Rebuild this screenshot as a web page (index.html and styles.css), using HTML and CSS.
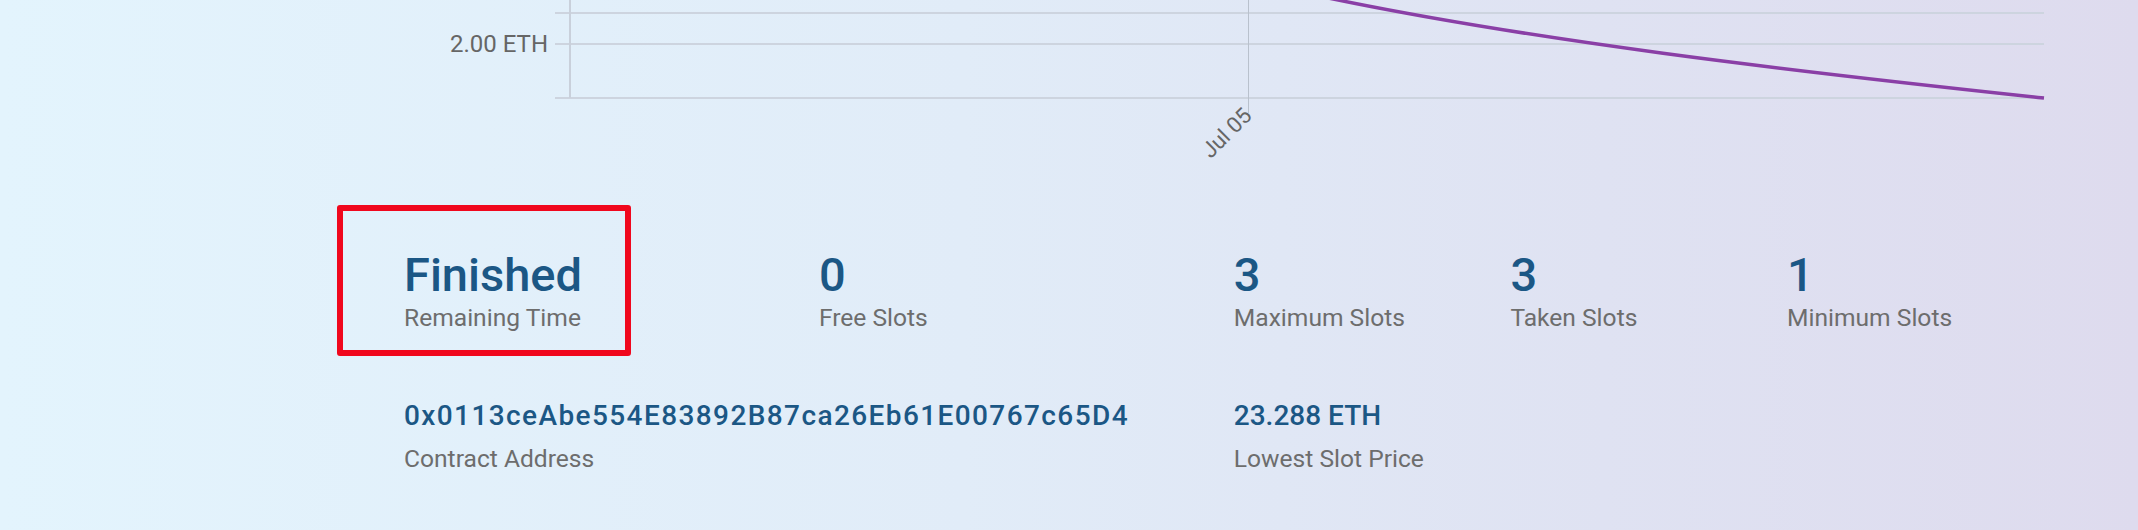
FILE: index.html
```html
<!DOCTYPE html>
<html lang="en">
<head>
<meta charset="utf-8">
<title>Slots</title>
<link rel="stylesheet" href="styles.css">
</head>
<body>
<div class="page">
  <svg class="chart" width="2138" height="176" viewBox="0 0 2138 176" xmlns="http://www.w3.org/2000/svg">
    <g class="grid">
      <line x1="555" y1="13" x2="2044" y2="13"/>
      <line x1="555" y1="44" x2="2044" y2="44"/>
      <line x1="555" y1="98" x2="2044" y2="98"/>
    </g>
    <line class="axis" x1="570" y1="0" x2="570" y2="98"/>
    <line class="vgrid" x1="1248.5" y1="0" x2="1248.5" y2="113"/>
    <text class="ylabel" x="548" y="52" text-anchor="end">2.00 ETH</text>
    <text class="xlabel" x="1253" y="117" text-anchor="end" transform="rotate(-45 1253 117)">Jul 05</text>
    <path class="curve" d="M1300,-8 C1520,40 1800,72 2044,98"/>
  </svg>

  <section class="stats">
    <div class="stat span3">
      <div class="value">Finished</div>
      <div class="label">Remaining Time</div>
      <div class="highlight"></div>
    </div>
    <div class="stat span3">
      <div class="value">0</div>
      <div class="label">Free Slots</div>
    </div>
    <div class="stat span2">
      <div class="value">3</div>
      <div class="label">Maximum Slots</div>
    </div>
    <div class="stat span2">
      <div class="value">3</div>
      <div class="label">Taken Slots</div>
    </div>
    <div class="stat span2">
      <div class="value">1</div>
      <div class="label">Minimum Slots</div>
    </div>

    <div class="stat span6 small">
      <div class="value address">0x0113ceAbe554E83892B87ca26Eb61E00767c65D4</div>
      <div class="label">Contract Address</div>
    </div>
    <div class="stat span6 small">
      <div class="value">23.288 ETH</div>
      <div class="label">Lowest Slot Price</div>
    </div>
  </section>
</div>
</body>
</html>
```

FILE: styles.css
```css
html, body {
  margin: 0;
  padding: 0;
}

body {
  width: 2138px;
  height: 530px;
  overflow: hidden;
  font-family: Roboto, "Liberation Sans", Arial, sans-serif;
  background: linear-gradient(90deg, #e3f4fd 0%, #e1ecf8 45%, #dfe2f2 75%, #dedbee 100%);
}

.page {
  display: flex;
  flex-direction: column;
}

.chart {
  display: block;
}

.grid line {
  stroke: #cdd4df;
  stroke-width: 2;
}

.axis {
  stroke: #c9d0db;
  stroke-width: 2;
}

.vgrid {
  stroke: #b9c1cd;
  stroke-width: 1;
}

.ylabel,
.xlabel {
  font-family: Roboto, "Liberation Sans", Arial, sans-serif;
  fill: #666;
}

.ylabel {
  font-size: 24px;
}

.xlabel {
  font-size: 22px;
}

.curve {
  fill: none;
  stroke: #8a3fa6;
  stroke-width: 3.5;
}

.stats {
  display: grid;
  grid-template-columns: repeat(12, 138.3px);
  row-gap: 54px;
  padding-left: 404px;
  margin-top: 70px;
}

.stat {
  position: relative;
}

.span2 { grid-column: span 2; }
.span3 { grid-column: span 3; }
.span6 { grid-column: span 6; }

.value {
  color: #1b5785;
  font-weight: 500;
  font-size: 47px;
  line-height: 58px;
  white-space: nowrap;
}

.small .value {
  font-size: 28px;
}

.address {
  letter-spacing: 1.4px;
}

.label {
  color: #6d6d6d;
  font-size: 24.6px;
  line-height: 28.8px;
  white-space: nowrap;
}

.highlight {
  position: absolute;
  left: -67px;
  top: -41px;
  width: 294px;
  height: 151px;
  box-sizing: border-box;
  border: 6px solid #f0071d;
  border-radius: 3px;
  pointer-events: none;
}
```
